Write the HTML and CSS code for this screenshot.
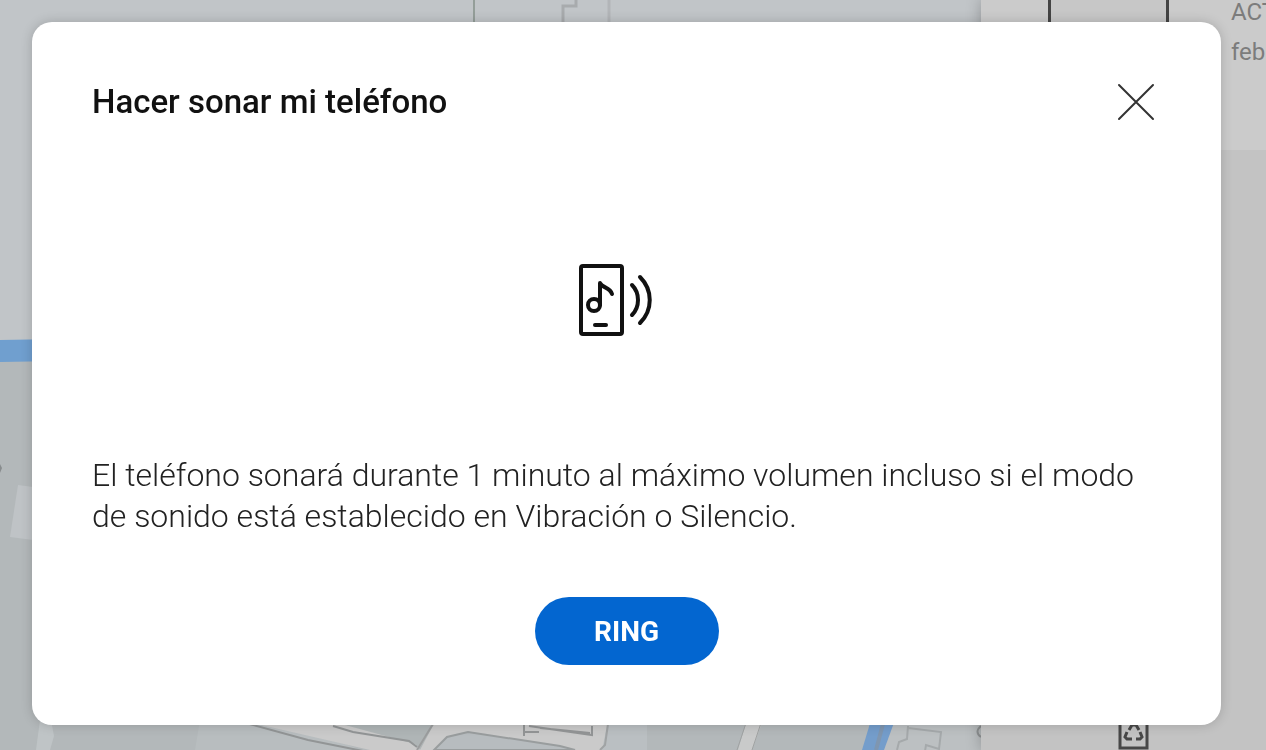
FILE: index.html
```html
<!DOCTYPE html>
<html lang="es">
<head>
  <meta charset="UTF-8">
  <meta name="viewport" content="width=device-width, initial-scale=1">
  <title>Hacer sonar mi teléfono</title>
  <link rel="stylesheet" href="styles.css">
</head>
<body>
  <div class="page">
    <div class="map">
      <svg viewBox="0 0 981 750" preserveAspectRatio="xMaxYMin slice" aria-hidden="true">
        <rect width="981" height="750" fill="#b3b8ba"/>
        <rect width="981" height="345" fill="#c1c5c8"/>
        <!-- parcels -->
        <path d="M474 0V40" stroke="#949e99" stroke-width="2"/>
        <path d="M576 0V6H563V40" fill="none" stroke="#a8abad" stroke-width="3"/>
        <path d="M609 0V40" stroke="#b2b5b8" stroke-width="3"/>
        <path d="M18 485l15 2v53l-23-3z" fill="#bfc3c6"/>
        <path d="M0 464l2 4-2 5z" fill="#888c8e"/>
        <!-- river -->
        <path d="M0 340l60-1v22l-60 1z" fill="#709fcf"/>
        <path d="M871 720h24l-9 30h-24z" fill="#749dcb"/>
        <path d="M883 724l-7 26" stroke="#7f96b0" stroke-width="4"/>
        <!-- streets -->
        <path d="M40 720h11l3 16-4 14H36z" fill="#bfc4c6"/>
        <path d="M200 720h90l70 30H195z" fill="#b8bdbf"/>
        <path d="M240 720l130 30h175l62 0 1-30z" fill="#cacaca"/>
        <path d="M242 722l66 18 60 12" fill="none" stroke="#929596" stroke-width="2"/>
        <path d="M334 722h101l-15 28-5-6z" fill="#afb5b6"/>
        <path d="M333 726l20 6 56 9 8 6" fill="none" stroke="#929596" stroke-width="2"/>
        <path d="M433 724l-16 26" stroke="#9b9d9e" stroke-width="2"/>
        <path d="M434 750l13-13 21-5 92 14 15 4z" fill="#b7bcbf" stroke="#999d9e" stroke-width="2"/>
        <path d="M524 725v11m0-4h15m-10-6l63 9v-9m-52 2l50 5" fill="none" stroke="#939596" stroke-width="2"/>
        <path d="M608 720h39v30h-45z" fill="#babfc2"/>
        <path d="M608 724l-3 21-5 5" fill="none" stroke="#a0a3a4" stroke-width="2"/>
        <path d="M747 720h16l-11 30h-14z" fill="#c9caca"/>
        <path d="M747 720l-10 30m25-30l-10 30" stroke="#a0a3a3" stroke-width="1"/>
        <path d="M895 720h86v30h-97z" fill="#bcc0c2"/>
        <path d="M908 726l-1 13-8 3-2 8m11-22l33 4-2 17-13-4-1 6" fill="none" stroke="#a5a9ab" stroke-width="2"/>
        <path d="M981 726q-7 6 0 11" fill="none" stroke="#929596" stroke-width="2"/>
      </svg>
    </div>
    <aside class="panel">
      <div class="device">
        <div class="device-picture"></div>
        <p class="device-status">ACT<br>feb</p>
      </div>
      <div class="actions">
        <svg class="recycle" viewBox="0 0 31 40" fill="none" stroke="#484848" stroke-width="3" aria-hidden="true">
          <rect x="2" y="2" width="27" height="36"/>
          <path d="M11 20l3-5h4l3 5M9 22l-2 5 2 2h5M22 22l2 5-2 2h-4"/>
        </svg>
      </div>
    </aside>
  </div>

  <div class="overlay">
    <section class="dialog" role="dialog" aria-modal="true" aria-labelledby="dialogTitle">
      <header class="dialog-header">
        <h1 id="dialogTitle">Hacer sonar mi teléfono</h1>
        <button class="close" type="button" aria-label="Cerrar">
          <svg viewBox="0 0 38 38" aria-hidden="true">
            <path d="M2 2l34 34M36 2L2 36" stroke="#333" stroke-width="2" stroke-linecap="round"/>
          </svg>
        </button>
      </header>
      <svg class="ring-icon" viewBox="0 0 96 72" fill="none" stroke="#111" stroke-width="4" aria-hidden="true">
        <rect x="2" y="2" width="41" height="68" rx="2"/>
        <circle cx="15" cy="41" r="6"/>
        <path d="M21 41V19c2 5 10 4 12 11" stroke-linecap="round" stroke-linejoin="round"/>
        <path d="M16 61h11" stroke-linecap="round"/>
        <path d="M53 21c8 8 8 22 0 30" stroke-linecap="round"/>
        <path d="M61 13c13 13 13 33 0 46" stroke-linecap="round"/>
      </svg>
      <p class="message">El teléfono sonará durante 1 minuto al máximo volumen incluso si el modo de sonido está establecido en Vibración o Silencio.</p>
      <button class="ring" type="button">RING</button>
    </section>
  </div>
</body>
</html>
```
FILE: styles.css
```css
* {
  box-sizing: border-box;
}
body {
  margin: 0;
  font-family: Roboto, "Liberation Sans", sans-serif;
  overflow: hidden;
}
h1, p {
  margin: 0;
}
button {
  border: none;
  padding: 0;
  font-family: inherit;
  cursor: pointer;
}

/* page behind the dialog */
.page {
  display: flex;
  height: 100vh;
}
.map {
  flex: 1;
  min-width: 0;
  background: #b3b8ba;
  overflow: hidden;
}
.map svg {
  display: block;
  width: 100%;
  height: 100%;
}
.panel {
  display: flex;
  flex-direction: column;
  width: 285px;
  background: #c3c3c3;
  box-shadow: 0 0 14px rgba(0, 0, 0, 0.25);
  overflow: hidden;
}
.device {
  display: flex;
  gap: 62px;
  height: 150px;
  padding-left: 67px;
  background: #cbcbcb;
}
.device-picture {
  flex: none;
  width: 121px;
  height: 100px;
  border: 3px solid #444;
  border-top: none;
  background: #c7c7c7;
}
.device-status {
  font-size: 24px;
  line-height: 40px;
  margin-top: -8px;
  color: #7c7c7c;
}
.actions {
  flex: 1;
  display: flex;
  align-items: flex-end;
  padding-left: 137px;
}
.recycle {
  width: 31px;
  height: 40px;
}

/* dialog */
.overlay {
  position: fixed;
  inset: 0;
  padding: 22px 45px 24px 32px;
}
.dialog {
  display: flex;
  flex-direction: column;
  align-items: center;
  padding: 60px;
  background: #fff;
  border-radius: 20px;
  box-shadow: 0 0 12px rgba(0, 0, 0, 0.18);
}
.dialog-header {
  display: flex;
  align-items: center;
  justify-content: space-between;
  width: 100%;
  height: 40px;
  padding-right: 6px;
}
h1 {
  font-size: 33px;
  font-weight: 500;
  line-height: 40px;
  color: #111;
}
.close {
  width: 38px;
  height: 38px;
  background: none;
}
.close svg {
  display: block;
}
.ring-icon {
  width: 96px;
  height: 72px;
  margin: 142px 0 119px;
}
.message {
  width: 100%;
  font-size: 32px;
  font-weight: 300;
  line-height: 41px;
  color: #222;
}
.ring {
  width: 184px;
  height: 68px;
  margin-top: 60px;
  border-radius: 34px;
  background: #0366d0;
  color: #fff;
  font-size: 28px;
  font-weight: 700;
}
```
